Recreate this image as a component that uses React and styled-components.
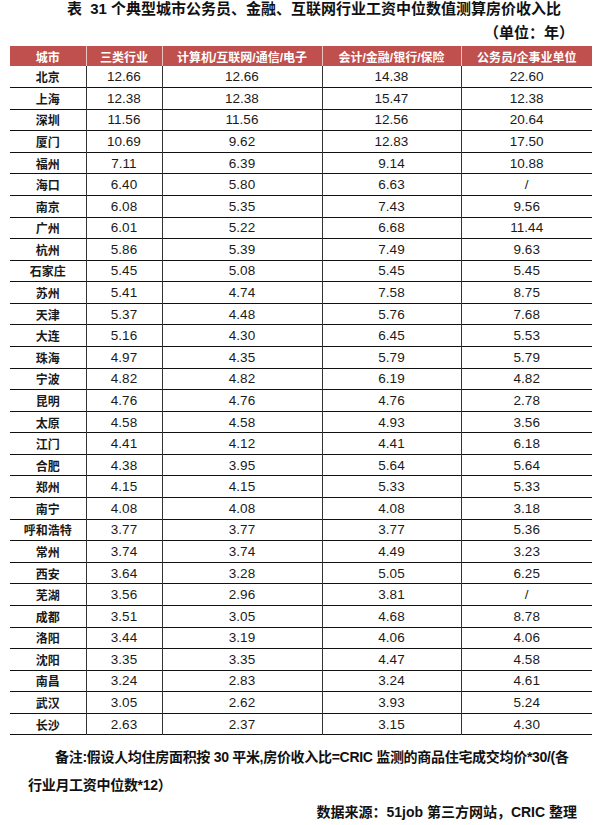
import styled, { createGlobalStyle } from "styled-components";

const GlobalStyle = createGlobalStyle`
  html, body {
    margin: 0;
    padding: 0;
    background: #ffffff;
  }
  body {
    font-family: "Liberation Sans", "Noto Sans CJK SC", sans-serif;
    color: #1a1a1a;
  }
`;

const rows = [
  ["北京", "12.66", "12.66", "14.38", "22.60"],
  ["上海", "12.38", "12.38", "15.47", "12.38"],
  ["深圳", "11.56", "11.56", "12.56", "20.64"],
  ["厦门", "10.69", "9.62", "12.83", "17.50"],
  ["福州", "7.11", "6.39", "9.14", "10.88"],
  ["海口", "6.40", "5.80", "6.63", "/"],
  ["南京", "6.08", "5.35", "7.43", "9.56"],
  ["广州", "6.01", "5.22", "6.68", "11.44"],
  ["杭州", "5.86", "5.39", "7.49", "9.63"],
  ["石家庄", "5.45", "5.08", "5.45", "5.45"],
  ["苏州", "5.41", "4.74", "7.58", "8.75"],
  ["天津", "5.37", "4.48", "5.76", "7.68"],
  ["大连", "5.16", "4.30", "6.45", "5.53"],
  ["珠海", "4.97", "4.35", "5.79", "5.79"],
  ["宁波", "4.82", "4.82", "6.19", "4.82"],
  ["昆明", "4.76", "4.76", "4.76", "2.78"],
  ["太原", "4.58", "4.58", "4.93", "3.56"],
  ["江门", "4.41", "4.12", "4.41", "6.18"],
  ["合肥", "4.38", "3.95", "5.64", "5.64"],
  ["郑州", "4.15", "4.15", "5.33", "5.33"],
  ["南宁", "4.08", "4.08", "4.08", "3.18"],
  ["呼和浩特", "3.77", "3.77", "3.77", "5.36"],
  ["常州", "3.74", "3.74", "4.49", "3.23"],
  ["西安", "3.64", "3.28", "5.05", "6.25"],
  ["芜湖", "3.56", "2.96", "3.81", "/"],
  ["成都", "3.51", "3.05", "4.68", "8.78"],
  ["洛阳", "3.44", "3.19", "4.06", "4.06"],
  ["沈阳", "3.35", "3.35", "4.47", "4.58"],
  ["南昌", "3.24", "2.83", "3.24", "4.61"],
  ["武汉", "3.05", "2.62", "3.93", "5.24"],
  ["长沙", "2.63", "2.37", "3.15", "4.30"],
];

const headers = ["城市", "三类行业", "计算机/互联网/通信/电子", "会计/金融/银行/保险", "公务员/企事业单位"];
const widths = [76, 76, 160, 139, 131];

export default function App() {
  return (
    <>
      <GlobalStyle />
      <Page>
        <Title>表&nbsp; 31 个典型城市公务员、金融、互联网行业工资中位数值测算房价收入比</Title>
        <Unit>（单位：年）</Unit>
        <Table>
          <colgroup>
            {widths.map((w, i) => <col key={i} style={{ width: w }} />)}
          </colgroup>
          <thead>
            <tr>
              {headers.map(h => <Th key={h}>{h}</Th>)}
            </tr>
          </thead>
          <tbody>
            {rows.map(r => (
              <Tr key={r[0]}>
                <City>{r[0]}</City>
                {r.slice(1).map((v, i) => <Num key={i}>{v}</Num>)}
              </Tr>
            ))}
          </tbody>
        </Table>
        <Note>
          备注:假设人均住房面积按 30 平米,房价收入比=CRIC 监测的商品住宅成交均价*30/(各<br />
          行业月工资中位数*12）
        </Note>
        <Source>数据来源：51job 第三方网站，CRIC 整理</Source>
      </Page>
    </>
  );
}

const Page = styled.div`
  width: 600px;
  height: 825px;
  overflow: hidden;
  display: flex;
  flex-direction: column;
`;

const Title = styled.div`
  font-size: 15px;
  font-weight: 700;
  line-height: 18px;
  color: #111;
  text-align: center;
  padding-left: 28px;
`;

const Unit = styled.div`
  font-size: 15px;
  font-weight: 700;
  line-height: 18px;
  color: #111;
  text-align: right;
  padding-right: 26px;
  margin-top: 6px;
`;

const Table = styled.table`
  margin: 4px 0 0 10px;
  width: 582px;
  border-collapse: collapse;
  table-layout: fixed;
`;

const Th = styled.th`
  height: 20px;
  padding: 0;
  background: #c0504d;
  color: #ffffff;
  font-size: 12px;
  font-weight: 700;
  text-align: center;
  border-left: 1px solid #e8c4c3;
  &:first-child { border-left: none; }
`;

const Tr = styled.tr`
  height: 21.58px;
  border-bottom: 1px solid #111;
`;

const Cell = styled.td`
  padding: 0;
  text-align: center;
  border-left: 1px solid #333;
  &:first-child { border-left: none; }
`;

const City = styled(Cell)`
  font-size: 12px;
  font-weight: 700;
  color: #1a1a1a;
`;

const Num = styled(Cell)`
  font-size: 13.5px;
  color: #1a1a1a;
`;

const Note = styled.div`
  margin-top: 8px;
  padding-left: 28px;
  text-indent: 27px;
  font-size: 14px;
  font-weight: 700;
  letter-spacing: -0.3px;
  line-height: 28px;
  color: #111;
  white-space: nowrap;
`;

const Source = styled.div`
  text-align: right;
  padding-right: 23px;
  font-size: 14px;
  font-weight: 700;
  line-height: 26px;
  color: #111;
`;
